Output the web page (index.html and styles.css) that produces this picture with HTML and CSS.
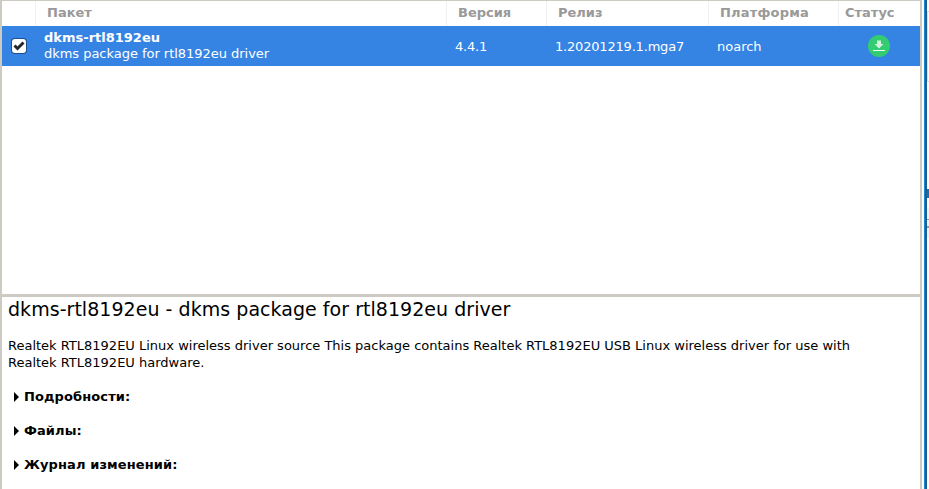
FILE: index.html

```html
<!DOCTYPE html>
<html lang="ru">
<head>
    <meta charset="UTF-8">
    <title>Пакеты</title>
    <link rel="stylesheet" href="styles.css">
</head>
<body>
    <div class="window">
        <div class="list">
            <div class="head">
                <div class="th th-check"></div>
                <div class="th th-name">Пакет</div>
                <div class="th th-ver">Версия</div>
                <div class="th th-rel">Релиз</div>
                <div class="th th-arch">Платформа</div>
                <div class="th th-status">Статус</div>
            </div>
            <div class="row">
                <div class="cell-check">
                    <span class="check">
                        <svg width="12" height="10" viewBox="0 0 12 10"><path d="M1.5 4.5 L4.5 7.5 L10.5 1.5" fill="none" stroke="#23262b" stroke-width="3"/></svg>
                    </span>
                </div>
                <div class="cell-name">
                    <b>dkms-rtl8192eu</b>
                    <span>dkms package for rtl8192eu driver</span>
                </div>
                <div class="cell-ver">4.4.1</div>
                <div class="cell-rel">1.20201219.1.mga7</div>
                <div class="cell-arch">noarch</div>
                <div class="cell-status">
                    <span class="status-icon">
                        <svg width="12" height="12" viewBox="0 0 12 12"><path d="M4 0.5 H8 V4 H10.5 L6 8.5 L1.5 4 H4 Z" fill="#d5f0df"/><rect x="0" y="10" width="12" height="1" fill="#f2fbf5"/></svg>
                    </span>
                </div>
            </div>
        </div>
        <div class="info">
            <h1>dkms-rtl8192eu - dkms package for rtl8192eu driver</h1>
            <p>Realtek RTL8192EU Linux wireless driver source This package contains Realtek RTL8192EU USB Linux wireless driver for use with Realtek RTL8192EU hardware.</p>
            <div class="section"><i class="arrow"></i>Подробности:</div>
            <div class="section"><i class="arrow"></i>Файлы:</div>
            <div class="section"><i class="arrow"></i>Журнал изменений:</div>
        </div>
    </div>
    <div class="backdrop">
        <div class="back-edge"></div>
        <div class="back-window">
            <div class="back-box"></div>
            <div class="back-glyph"></div>
            <div class="back-panel"></div>
        </div>
    </div>
</body>
</html>
```

FILE: styles.css

```css
html, body {
    margin: 0;
    height: 100%;
}
body {
    font-family: "DejaVu Sans", sans-serif;
    font-size: 13px;
    color: #000;
    background: #fff;
    display: flex;
    height: 489px;
    overflow: hidden;
}
.window {
    width: 918px;
    flex: none;
    border: 2px solid #cdc9c3;
    border-width: 1px 2px 0 2px;
    background: #fff;
    display: flex;
    flex-direction: column;
}
.list {
    height: 293px;
    flex: none;
}
.head {
    display: grid;
    grid-template-columns: 34px 411px 100px 162px 130px 81px;
    height: 25px;
}
.th {
    font-weight: bold;
    font-size: 13px;
    color: #999;
    line-height: 23px;
    padding-left: 11px;
    border-right: 1px solid #f0f0f0;
    white-space: nowrap;
    overflow: hidden;
    box-sizing: border-box;
}
.th-arch {
    letter-spacing: 0.2px;
}
.th-status {
    border-right: none;
    padding-left: 6px;
}
.row {
    display: grid;
    grid-template-columns: 34px 411px 100px 162px 130px 81px;
    height: 40px;
    background: #3584e4;
    color: #fff;
    align-items: center;
}
.cell-check {
    padding-left: 10px;
}
.check {
    display: flex;
    align-items: center;
    justify-content: center;
    width: 14px;
    height: 14px;
    background: #fff;
    border-radius: 3px;
    box-shadow: 0 0 0 1px #1d4f8c;
}
.cell-name {
    padding-left: 8px;
    line-height: 16px;
}
.cell-name b, .cell-name span {
    display: block;
}
.cell-name span {
    letter-spacing: -0.03px;
}
.cell-ver, .cell-rel, .cell-arch {
    padding-left: 8px;
}
.cell-ver {
    letter-spacing: -0.2px;
}
.cell-rel {
    letter-spacing: -0.19px;
}
.cell-status {
    display: flex;
    padding-left: 29px;
}
.status-icon {
    display: flex;
    align-items: center;
    justify-content: center;
    width: 22px;
    height: 22px;
    border-radius: 50%;
    background: #33cc70;
}
.info {
    flex: 1;
    border-top: 3px solid #cdc9c3;
    padding: 0 6px;
    overflow: hidden;
}
h1 {
    font-size: 19px;
    font-weight: normal;
    line-height: 24px;
    letter-spacing: 0.04px;
    margin: 0 0 16px;
}
p {
    margin: 0 0 17px;
    line-height: 17px;
    width: 860px;
}
.section {
    display: flex;
    align-items: center;
    font-weight: bold;
    height: 17px;
    letter-spacing: 0.1px;
    margin: 0 0 17px 6px;
}
.arrow {
    width: 0;
    height: 0;
    border-left: 5px solid #000;
    border-top: 5px solid transparent;
    border-bottom: 5px solid transparent;
    margin-right: 5px;
}
/* window behind this one, only a sliver shows */
.backdrop {
    flex: 1;
    display: flex;
    background: #fff;
    padding-left: 2px;
}
.back-edge {
    width: 1px;
    flex: none;
    background: #1a8ccf;
    border-right: 2px solid #1f5f8f;
}
.back-window {
    flex: 1;
    padding-top: 11px;
}
.back-box {
    height: 69px;
    border: 1px solid #dddddd;
    border-right: none;
}
.back-glyph {
    width: 2px;
    height: 9px;
    margin-top: 107px;
    background: #1a6fb0;
}
.back-panel {
    height: 30px;
    margin-top: 10px;
    background: linear-gradient(#eef3f5 35%, #999 35%, #999 40%, #eef3f5 40%, #eef3f5 60%, #999 60%, #999 65%, #eef3f5 65%);
}
```
